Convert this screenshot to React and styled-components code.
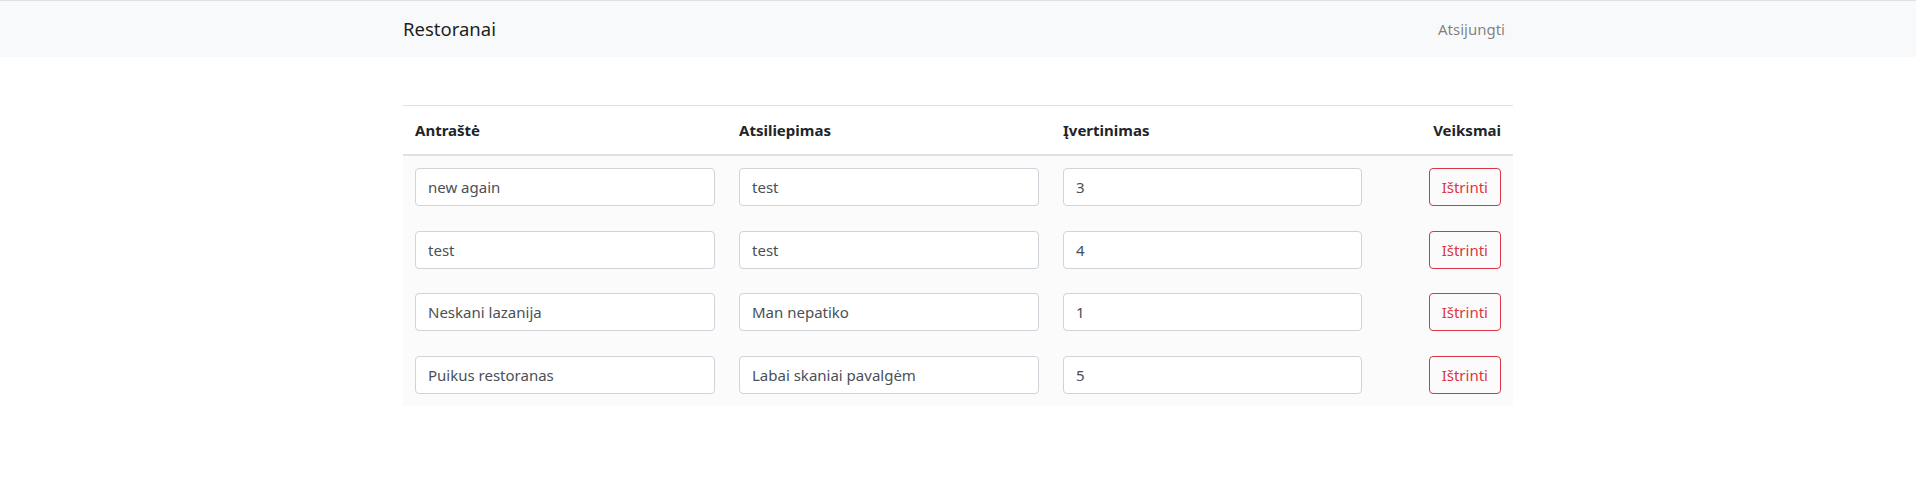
import React, { useState } from "react";
import styled, { createGlobalStyle } from "styled-components";

const GlobalStyle = createGlobalStyle`
  * {
    box-sizing: border-box;
  }
  body {
    margin: 0;
    font-family: "Noto Sans", "Open Sans", sans-serif;
    font-size: 15px;
    line-height: 24px;
    color: #212529;
    background: #ffffff;
  }
`;

const initialReviews = [
  { id: 1, title: "new again", review: "test", rating: "3" },
  { id: 2, title: "test", review: "test", rating: "4" },
  { id: 3, title: "Neskani lazanija", review: "Man nepatiko", rating: "1" },
  { id: 4, title: "Puikus restoranas", review: "Labai skaniai pavalgėm", rating: "5" },
];

const App = () => {
  const [reviews, setReviews] = useState(initialReviews);

  const setField = (id, field, value) => {
    const next = reviews.map((item) =>
      item.id === id ? { ...item, [field]: value } : item
    );
    setReviews(next);
  };

  const delReview = (id) => {
    setReviews(reviews.filter((item) => item.id !== id));
  };

  return (
    <>
      <GlobalStyle />
      <Navbar>
        <NavInner>
          <Brand href="#">Restoranai</Brand>
          <NavLink href="#">Atsijungti</NavLink>
        </NavInner>
      </Navbar>
      <Container>
        <Table>
          <HeadRow>
            <HeadCell>Antraštė</HeadCell>
            <HeadCell>Atsiliepimas</HeadCell>
            <HeadCell>Įvertinimas</HeadCell>
            <HeadCell $right>Veiksmai</HeadCell>
          </HeadRow>
          {reviews.map((item) => (
            <Row key={item.id}>
              <Cell>
                <Input
                  type="text"
                  value={item.title}
                  onChange={(e) => setField(item.id, "title", e.target.value)}
                />
              </Cell>
              <Cell>
                <Input
                  type="text"
                  value={item.review}
                  onChange={(e) => setField(item.id, "review", e.target.value)}
                />
              </Cell>
              <Cell>
                <Input
                  type="text"
                  value={item.rating}
                  onChange={(e) => setField(item.id, "rating", e.target.value)}
                />
              </Cell>
              <Cell $right>
                <DeleteButton onClick={() => delReview(item.id)}>
                  Ištrinti
                </DeleteButton>
              </Cell>
            </Row>
          ))}
        </Table>
      </Container>
    </>
  );
};

const Navbar = styled.nav`
  background-color: #f8f9fa;
  border-top: 1px solid #dee2e6;
  height: 57px;
`;

const NavInner = styled.div`
  width: 1110px;
  margin: 0 auto;
  height: 100%;
  display: flex;
  align-items: center;
  justify-content: space-between;
`;

const Brand = styled.a`
  font-size: 18.5px;
  line-height: 30px;
  color: rgba(0, 0, 0, 0.9);
  text-decoration: none;
`;

const NavLink = styled.a`
  padding: 8px;
  font-size: 15px;
  color: rgba(0, 0, 0, 0.5);
  text-decoration: none;
`;

const Container = styled.div`
  width: 1110px;
  margin: 48px auto 0;
`;

const Table = styled.div`
  border-top: 1px solid #dee2e6;
`;

const HeadRow = styled.div`
  display: grid;
  grid-template-columns: 324px 324px 323px 1fr;
  border-bottom: 2px solid #dee2e6;
`;

const HeadCell = styled.div`
  padding: 12px;
  font-weight: 700;
  line-height: 24px;
  text-align: ${(props) => (props.$right ? "right" : "left")};
`;

const Row = styled.div`
  display: grid;
  grid-template-columns: 324px 324px 323px 1fr;
  background-color: #fbfbfb;
`;

const Cell = styled.div`
  padding: 12.25px 12px;
  display: flex;
  justify-content: ${(props) => (props.$right ? "flex-end" : "flex-start")};
`;

const Input = styled.input`
  width: 100%;
  height: 38px;
  padding: 6px 12px;
  font-family: inherit;
  font-size: 15px;
  color: #495057;
  background-color: #ffffff;
  border: 1px solid #ced4da;
  border-radius: 4px;
  outline: none;
`;

const DeleteButton = styled.button`
  height: 38px;
  padding: 6px 12px;
  font-family: inherit;
  font-size: 15px;
  line-height: 24px;
  color: #dc3545;
  background: transparent;
  border: 1px solid #dc3545;
  border-radius: 4px;
  cursor: pointer;
`;

export default App;
